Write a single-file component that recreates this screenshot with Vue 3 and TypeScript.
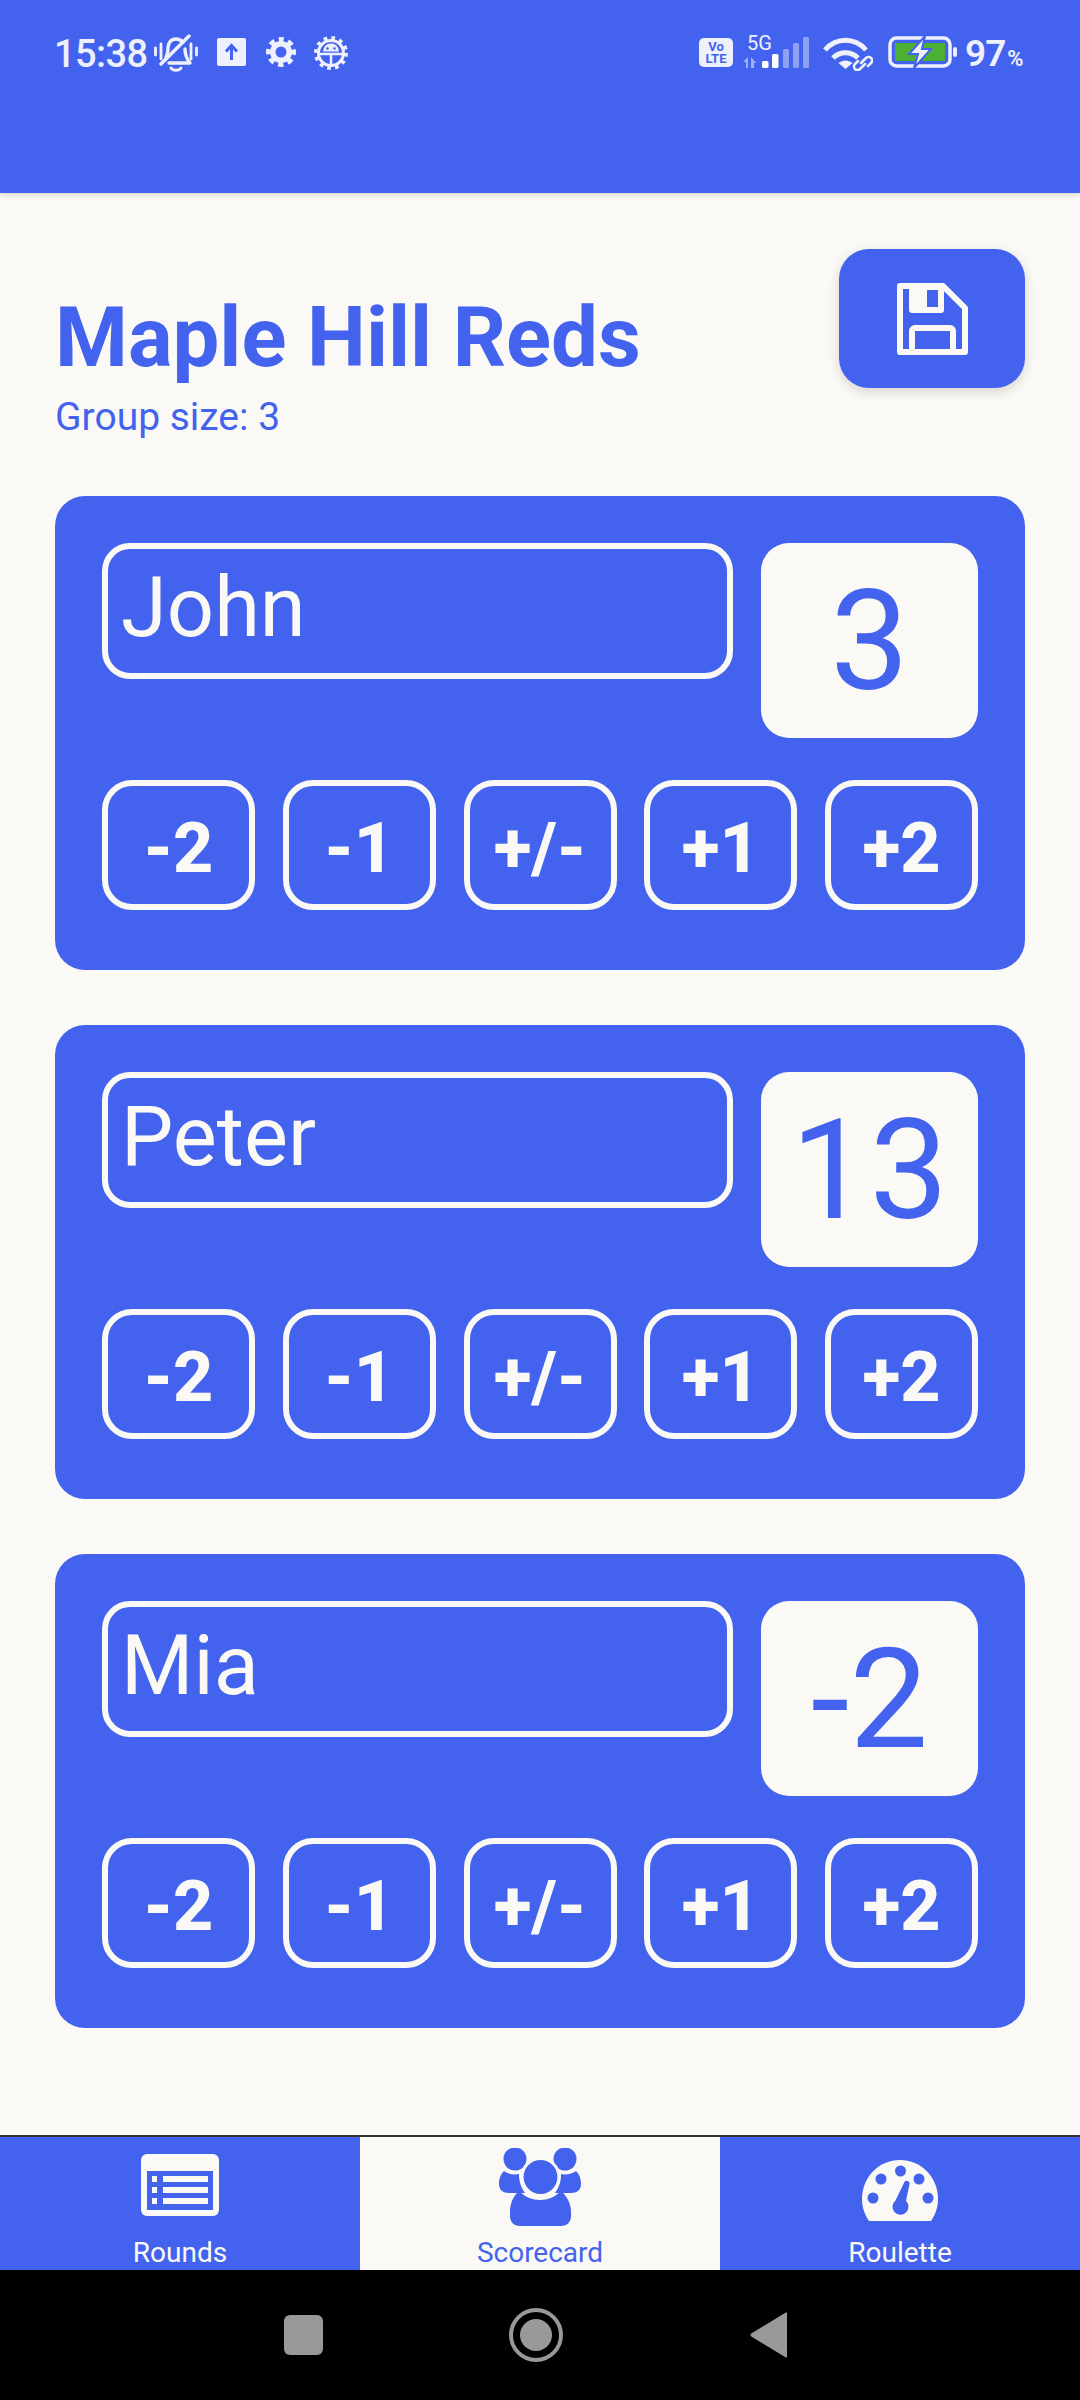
<script setup lang="ts">
interface Player { name: string; score: string }
const players: Player[] = [
  { name: 'John', score: '3' },
  { name: 'Peter', score: '13' },
  { name: 'Mia', score: '-2' },
]
const deltas: string[] = ['-2', '-1', '+/-', '+1', '+2']
</script>

<template>
  <div class="phone">
    <header class="status">
      <div class="status-row">
        <span class="time">15:38</span>
        <svg class="i-bell" width="44" height="38" viewBox="0 0 44 38" fill="none" stroke="#eef1fd" stroke-width="3.400" stroke-linecap="round">
          <path d="M1.500 14v7M7 10v15M37 10v15M42.500 14v7" stroke-width="2.800" />
          <path d="M12 23c2-3 2-6 2-9 0-5 3-9 8-9 3 0 5 1 7 3M31 15c0 5 1 9 5 14H15" stroke-linejoin="round" />
          <path d="M7 30 35 2" />
          <path d="M17 34c2 3 8 3 10 0" stroke-width="3" />
        </svg>
        <svg class="i-up" width="29" height="28" viewBox="0 0 29 28">
          <rect width="29" height="28" rx="2" fill="#eef1fd" />
          <path d="M14.500 22V8M9 13.500l5.500-6 5.500 6" fill="none" stroke="#4363ee" stroke-width="3" />
        </svg>
        <svg class="i-gear" width="30" height="30" viewBox="0 0 30 30">
          <circle cx="15" cy="15" r="11" fill="#eef1fd" />
          <circle cx="15" cy="15" r="12.500" fill="none" stroke="#eef1fd" stroke-width="5" stroke-dasharray="5.300 4.517" stroke-dashoffset="2.650" transform="rotate(-90 15 15)" />
          <circle cx="15" cy="15" r="5.500" fill="#4363ee" />
        </svg>
        <svg class="i-bug" width="34" height="34" viewBox="0 0 34 34" fill="none" stroke="#eef1fd">
          <circle cx="17" cy="17" r="12.500" stroke-width="3" />
          <circle cx="17" cy="17" r="15" stroke-width="4" stroke-dasharray="3.600 4.254" />
          <path d="M5 18h24M17 18v12" stroke-width="2.500" />
          <path d="M9 15.500a8 8 0 0 1 16 0z" fill="#eef1fd" stroke="none" />
          <circle cx="13.500" cy="12.500" r="1.300" fill="#4363ee" stroke="none" />
          <circle cx="20.500" cy="12.500" r="1.300" fill="#4363ee" stroke="none" />
        </svg>
        <span class="spacer"></span>
        <svg class="i-volte" width="34" height="29" viewBox="0 0 34 29">
          <rect width="34" height="29" rx="5" fill="#eef1fd" />
          <text x="17" y="13" class="volte-t">Vo</text>
          <text x="17" y="25" class="volte-t">LTE</text>
        </svg>
        <svg class="i-signal" width="67" height="38" viewBox="0 -4 67 38">
          <text x="4" y="15" class="five-g">5G</text>
          <path d="M0 27l5-5v11H3v-6zM8 22l5 6h-2v5H8z" fill="#eef1fd" opacity=".55" />
          <rect x="19" y="26" width="6.500" height="7" rx="1.500" fill="#fff" />
          <rect x="29" y="19" width="6.500" height="14" rx="1.500" fill="#fff" />
          <rect x="40" y="14" width="6" height="19" rx="1.500" fill="#fff" opacity=".4" />
          <rect x="50" y="8" width="6" height="25" rx="1.500" fill="#fff" opacity=".4" />
          <rect x="60" y="2" width="6" height="31" rx="1.500" fill="#fff" opacity=".4" />
        </svg>
        <svg class="i-wifi" width="50" height="34" viewBox="0 0 50 34" fill="none" stroke="#eef1fd" stroke-width="5">
          <path d="M2 13C13 0 32 0 43 13" />
          <path d="M10 21c7-7 18-7 25 0" />
          <path d="M15.500 26c4-3.500 10-3.500 14 0L22.500 32z" fill="#eef1fd" stroke="none" />
          <g stroke-width="2.500" stroke-linecap="round">
            <path d="M38 26l5-5a3.500 3.500 0 0 1 5 5l-3 3" />
            <path d="M42 27l-5 5a3.500 3.500 0 0 1-5-5l3-3" />
          </g>
        </svg>
        <svg class="i-batt" width="70" height="32" viewBox="0 0 70 32">
          <rect x="2" y="2" width="60" height="28" rx="6.500" fill="none" stroke="#eef1fd" stroke-width="3.500" />
          <rect x="7" y="7" width="50" height="18" fill="#4cb034" />
          <rect x="65" y="11" width="4" height="10" rx="2" fill="#eef1fd" />
          <path d="M37 0 21 18h9l-4 14 17-19h-9z" fill="#eef1fd" stroke="#4363ee" stroke-width="2" />
        </svg>
        <span class="pct">97<small>%</small></span>
      </div>
    </header>

    <main class="main">
      <div class="head">
        <div class="titles">
          <h1 class="title">Maple Hill Reds</h1>
          <p class="sub">Group size: 3</p>
        </div>
        <button class="save" type="button" aria-label="Save">
          <svg width="71" height="72" viewBox="0 0 71 72" fill="none" stroke="#fbf9f6" stroke-width="6" stroke-linejoin="round">
            <path d="M3 3h43l22 22v44H3z" />
            <rect x="12" y="3" width="35" height="27" rx="3" fill="#fbf9f6" stroke="none" />
            <rect x="30" y="7" width="11" height="17" fill="#4363ee" stroke="none" />
            <path d="M15 69V48a3 3 0 0 1 3-3h35a3 3 0 0 1 3 3v21" />
          </svg>
        </button>
      </div>

      <section v-for="p in players" :key="p.name" class="card">
        <div class="top">
          <div class="name">{{ p.name }}</div>
          <div class="score">{{ p.score }}</div>
        </div>
        <div class="btns">
          <button v-for="d in deltas" :key="d" class="btn" type="button">{{ d }}</button>
        </div>
      </section>
    </main>

    <nav class="tabs">
      <div class="tab">
        <svg class="t1" width="78" height="62" viewBox="0 0 78 62">
          <rect width="78" height="62" rx="6" fill="#fbf9f6" />
          <rect x="6" y="17" width="66" height="39" fill="#4363ee" />
          <g fill="#fbf9f6">
            <rect x="11" y="22" width="5" height="6" />
            <rect x="11" y="33" width="5" height="6" />
            <rect x="11" y="44" width="5" height="6" />
            <rect x="22" y="22" width="45" height="6" />
            <rect x="22" y="33" width="45" height="6" />
            <rect x="22" y="44" width="45" height="6" />
          </g>
        </svg>
        <span class="label">Rounds</span>
      </div>
      <div class="tab active">
        <svg class="t2" width="84" height="78" viewBox="0 0 84 78">
          <g fill="#4363ee">
            <circle cx="17" cy="11" r="11.500" />
            <circle cx="67" cy="11" r="11.500" />
            <path d="M6 23c4 3 10 4 15 3 0 8 2 13 6 19-5 0-11 0-16 0-6 0-10-3-10-9 0-6 2-10 5-13z" />
            <path d="M78 23c-4 3-10 4-15 3 0 8-2 13-6 19 5 0 11 0 16 0 6 0 10-3 10-9 0-6-2-10-5-13z" />
            <path d="M21 43c6 6 13 9 21 9s15-3 21-9c6 5 10 13 10 20v5c0 6-4 10-10 10H22c-6 0-10-4-10-10v-5c0-7 3-15 9-20z" />
            <circle cx="42.500" cy="29" r="18.400" stroke="#fbf9f6" stroke-width="3" />
          </g>
        </svg>
        <span class="label">Scorecard</span>
      </div>
      <div class="tab">
        <svg class="t3" width="78" height="62" viewBox="0 0 78 62">
          <path d="M8 61C3 54 1 46 1 39 1 17 18 0 39 0s38 17 38 39c0 7-2 15-7 22z" fill="#fbf9f6" />
          <g fill="#4363ee">
            <circle cx="39.500" cy="11" r="5.500" />
            <circle cx="20" cy="19" r="5.500" />
            <circle cx="58" cy="19" r="5.500" />
            <circle cx="12" cy="38" r="5.500" />
            <circle cx="67" cy="38" r="5.500" />
            <path d="M43 23a2.800 2.800 0 0 1 5.500 1L45 41a8 8 0 1 1-10.500-.5z" />
          </g>
        </svg>
        <span class="label">Roulette</span>
      </div>
    </nav>

    <footer class="sysnav">
      <span class="sq"></span>
      <span class="circle"><span class="dot"></span></span>
      <svg width="38" height="46" viewBox="0 0 38 46"><path d="M37 2v42c0 2-1 2-2 1L2 25c-2-1-2-3 0-4L35 1c1-1 2-1 2 1z" fill="#999" /></svg>
    </footer>
  </div>
</template>

<style>
body { margin: 0; background: #fbf9f6; }
</style>

<style scoped>
.phone {
  width: 1080px;
  height: 2400px;
  display: flex;
  flex-direction: column;
  background: #fbf9f6;
  font-family: Roboto, "Liberation Sans", sans-serif;
  overflow: hidden;
}
.status {
  height: 193px;
  flex: none;
  background: #4363ee;
  box-shadow: 0 2px 5px rgba(0, 0, 0, .14);
  position: relative;
  box-sizing: border-box;
  padding: 33px 59px 0 54px;
}
.status-row { display: flex; align-items: flex-start; height: 40px; color: #eef1fd; }
.time { font-size: 38px; font-weight: 500; letter-spacing: -.6px; width: 96px; line-height: 40px; margin-top: 1px; white-space: nowrap; }
.i-bell { margin-left: 4px; margin-top: 1px; }
.i-up { margin-left: 19px; margin-top: 5px; }
.i-gear { margin-left: 20px; margin-top: 4px; }
.i-bug { margin-left: 18px; margin-top: 3px; }
.spacer { flex: 1; }
.i-volte { margin-top: 5px; }
.i-signal { margin-left: 10px; margin-top: -2px; }
.i-wifi { margin-left: 13px; margin-top: 4px; }
.i-batt { margin-left: 15px; margin-top: 3px; }
.volte-t { font-size: 13px; font-weight: 700; fill: #4363ee; text-anchor: middle; }
.five-g { font-size: 20px; fill: #eef1fd; }
.pct { margin-left: 7px; font-size: 37px; font-weight: 600; letter-spacing: -1px; line-height: 40px; margin-top: 1px; width: 56px; white-space: nowrap; }
.pct small { font-size: 22px; letter-spacing: 0; margin-left: 2px; }
.main { flex: 1; padding: 56px 55px 0; box-sizing: border-box; }
.head { height: 247px; display: flex; justify-content: space-between; align-items: flex-start; }
.title { margin: 0; font-size: 83.300px; font-weight: 700; line-height: 94px; color: #4363ee; padding-top: 42px; white-space: nowrap; }
.sub { margin: 0; font-size: 39px; line-height: 44px; color: #4363ee; padding-top: 10px; }
.save {
  width: 186px;
  height: 139px;
  border: 0;
  padding: 0;
  border-radius: 30px;
  background: #4363ee;
  box-shadow: 0 4px 12px rgba(0, 0, 0, .14);
  display: flex;
  align-items: center;
  justify-content: center;
}
.card {
  width: 970px;
  height: 474px;
  box-sizing: border-box;
  margin-bottom: 55px;
  padding: 47px 47px 0;
  background: #4363ee;
  border-radius: 30px;
}
.top { display: flex; justify-content: space-between; align-items: flex-start; height: 195px; }
.name {
  width: 631px;
  height: 136px;
  box-sizing: border-box;
  border: 6px solid #fbf9f6;
  border-radius: 28px;
  padding-left: 13px;
  font-size: 83px;
  line-height: 118px;
  color: #fbf9f6;
}
.score {
  width: 217px;
  height: 195px;
  border-radius: 28px;
  background: #fbf9f6;
  color: #4363ee;
  font-size: 140px;
  line-height: 197px;
  text-align: center;
}
.btns { display: flex; justify-content: space-between; margin-top: 42px; }
.btn {
  width: 153px;
  height: 130px;
  box-sizing: border-box;
  border: 6px solid #fbf9f6;
  border-radius: 30px;
  background: transparent;
  color: #fbf9f6;
  font-family: inherit;
  font-size: 70px;
  font-weight: 800;
  padding: 6px 0 0;
}
.tabs { height: 135px; flex: none; display: flex; border-top: 2px solid #333; box-sizing: border-box; }
.tab {
  flex: 1;
  background: #4363ee;
  color: #fbf9f6;
  display: flex;
  flex-direction: column;
  align-items: center;
  position: relative;
  overflow: hidden;
}
.tab.active { background: #fbf9f6; color: #4363ee; }
.t1 { margin-top: 17px; }
.t2 { margin-top: 11px; }
.t3 { margin-top: 23px; }
.label { position: absolute; left: 0; right: 0; top: 98px; text-align: center; font-size: 28px; line-height: 36px; }
.sysnav {
  height: 130px;
  flex: none;
  background: #000;
  display: flex;
  align-items: center;
  padding-left: 284px;
  box-sizing: border-box;
}
.sq { width: 39px; height: 40px; border-radius: 6px; background: #999; margin-right: 186px; }
.circle {
  width: 54px;
  height: 54px;
  box-sizing: border-box;
  border: 4px solid #999;
  border-radius: 50%;
  display: flex;
  align-items: center;
  justify-content: center;
  margin-right: 187px;
}
.dot { width: 32px; height: 32px; border-radius: 50%; background: #999; }
</style>
